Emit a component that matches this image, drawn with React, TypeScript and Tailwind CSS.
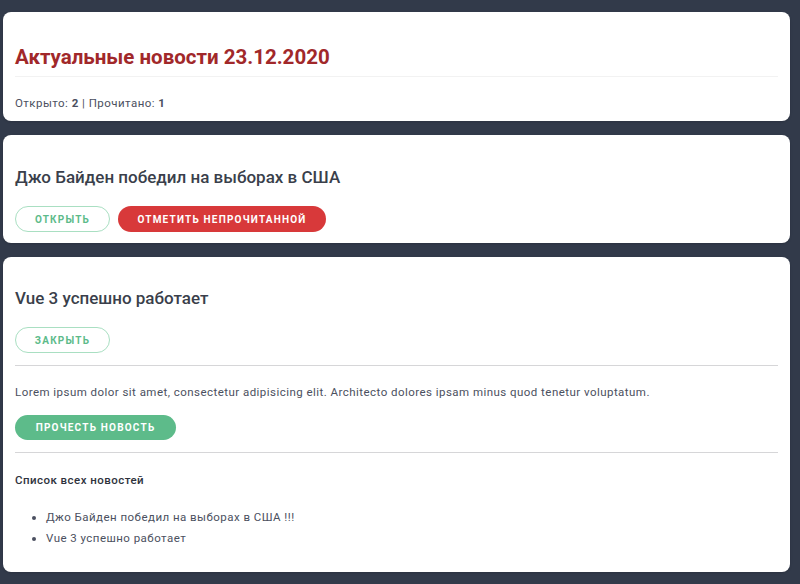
const news = [
  { id: 1, title: 'Джо Байден победил на выборах в США', opened: false },
  { id: 2, title: 'Vue 3 успешно работает', opened: true },
];

const font = { fontFamily: 'Roboto, "Noto Sans", sans-serif' };

function Card({ children }: { children: React.ReactNode }) {
  return <div className="rounded-lg bg-white px-3 shadow-sm">{children}</div>;
}

const outline =
  'h-[26px] w-[95px] rounded-full border border-[#a9dfc2] text-[10px] font-bold tracking-[0.12em] text-[#5dbb8a]';

export default function App() {
  return (
    <div style={font} className="min-h-[584px] bg-[#323a4a] pl-[3px] pr-[10px] pt-3">
      <div className="flex flex-col gap-[14px]">
        <Card>
          <div className="h-[109px] pt-[33px]">
            <h1 className="text-[20.5px] leading-6 font-bold text-[#a1282a]">Актуальные новости 23.12.2020</h1>
            <div className="mt-[7px] h-px bg-[#f2f2f2]" />
            <p className="mt-[18px] text-[11.5px] tracking-[0.04em] text-[#4b5060]">
              Открыто: <strong>2</strong> | Прочитано: <strong>1</strong>
            </p>
          </div>
        </Card>

        <Card>
          <div className="h-[108px] pt-[32px]">
            <h2 className="text-[17px] leading-5 font-medium text-[#3a3f4b]">{news[0].title}</h2>
            <div className="mt-[19px] flex gap-2">
              <button className={outline}>ОТКРЫТЬ</button>
              <button className="h-[26px] w-[208px] rounded-full bg-[#d8393a] text-[10px] font-bold tracking-[0.12em] text-white">
                ОТМЕТИТЬ НЕПРОЧИТАННОЙ
              </button>
            </div>
          </div>
        </Card>

        <Card>
          <div className="h-[315px] pt-[31px]">
            <h2 className="text-[17px] leading-5 font-medium text-[#3a3f4b]">{news[1].title}</h2>
            <button className={'mt-[19px] ' + outline}>ЗАКРЫТЬ</button>
            <div className="mt-3 h-px bg-[#d6d6d8]" />
            <p className="mt-[18px] text-[11.5px] leading-4 tracking-[0.04em] text-[#4b5060]">
              Lorem ipsum dolor sit amet, consectetur adipisicing elit. Architecto dolores ipsam minus quod tenetur voluptatum.
            </p>
            <button className="mt-[15px] h-[25px] w-[161px] rounded-full bg-[#5dbb8a] text-[10px] font-bold tracking-[0.12em] text-white">
              ПРОЧЕСТЬ НОВОСТЬ
            </button>
            <div className="mt-[12px] h-px bg-[#d6d6d8]" />
            <p className="mt-[19px] text-[11.5px] leading-4 font-medium tracking-[0.04em] text-[#2f333d]">
              Список всех новостей
            </p>
            <ul className="mt-[19px] list-disc pl-[31px] text-[11.5px] leading-[21px] tracking-[0.04em] text-[#4b5060]">
              <li>Джо Байден победил на выборах в США !!!</li>
              <li>Vue 3 успешно работает</li>
            </ul>
          </div>
        </Card>
      </div>
    </div>
  );
}
